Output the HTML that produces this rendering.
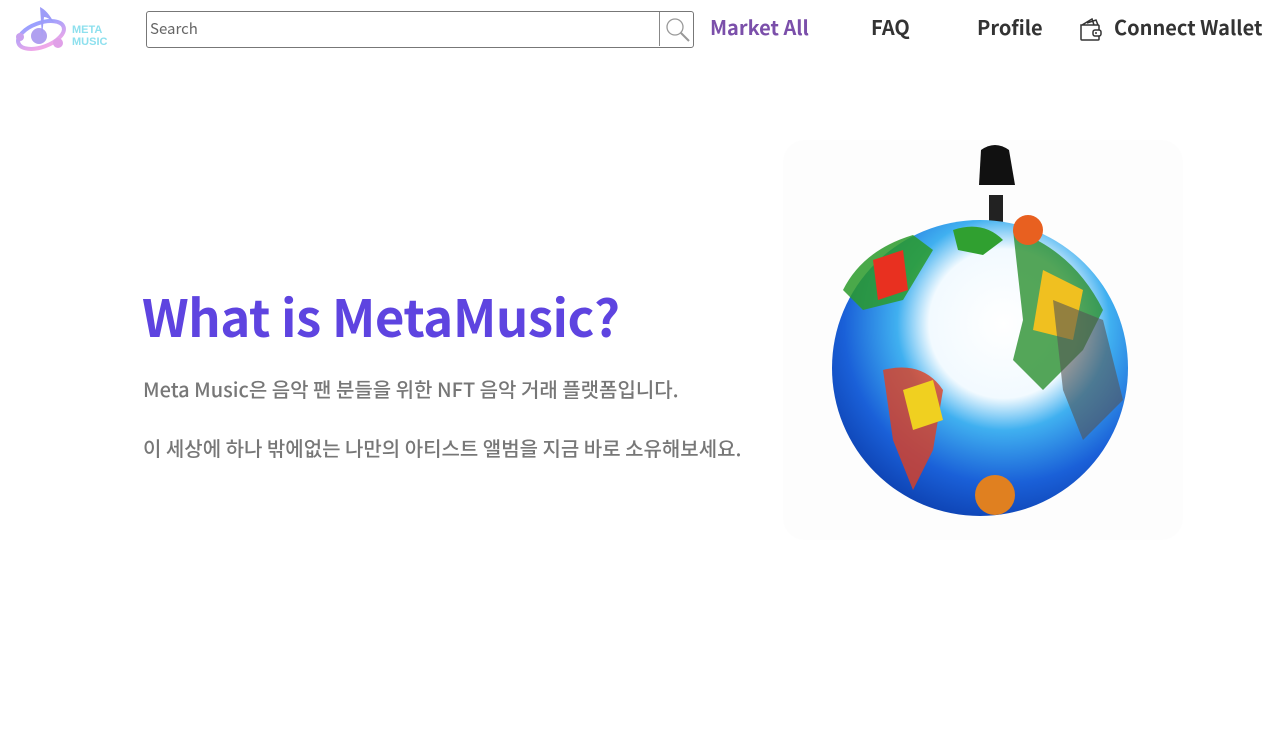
<!DOCTYPE html>
<html><head><meta charset="utf-8"><style>
*{margin:0;padding:0;box-sizing:border-box}
body{width:1272px;height:729px;background:#fff;font-family:"Noto Sans CJK KR","Liberation Sans",sans-serif;position:relative;overflow:hidden}
.nav{position:absolute;font-weight:700;font-size:20px;color:#333;top:12px;line-height:30px}
.search{position:absolute;left:146px;top:11px;width:548px;height:37px;border:1.5px solid #777;border-radius:3px}
.search span{position:absolute;left:3px;top:6px;font-size:15px;color:#666;font-family:"Noto Sans CJK KR",sans-serif;}
.search .btn{position:absolute;right:0;top:0;width:34px;height:34px;border-left:1px solid #888}
h1{position:absolute;left:142px;top:277px;font-size:51px;font-weight:700;color:#5e44e0;letter-spacing:-0.5px;line-height:76px}
p{position:absolute;left:143px;font-size:20px;font-weight:500;color:#777;line-height:28px}
.card{position:absolute;left:783px;top:140px;width:400px;height:400px;border-radius:22px;background:#fdfdfd}
</style></head><body>
<svg style="position:absolute;left:14px;top:3px" width="100" height="52" viewBox="0 0 100 52">
<defs><linearGradient id="lg" x1="0" y1="0" x2="0" y2="1"><stop offset="0" stop-color="#9aa0ff"/><stop offset="1" stop-color="#f0a8e8"/></linearGradient></defs>
<ellipse cx="27" cy="32" rx="24" ry="12" fill="none" stroke="url(#lg)" stroke-width="4" transform="rotate(-20 27 32)"/>
<circle cx="25" cy="33" r="8" fill="#b0a0f0"/>
<path d="M28 33 L26 4 Q34 8 40 20 Q34 14 30 14 Z" fill="#9d9cf8"/>
<circle cx="6" cy="34" r="4" fill="#c8a0ee"/><circle cx="44" cy="40" r="5" fill="#e0a0e8"/>
<text x="58" y="30" font-family="Liberation Sans,sans-serif" font-weight="700" font-size="11" fill="#8ee0ee">META</text>
<text x="58" y="42" font-family="Liberation Sans,sans-serif" font-weight="700" font-size="11" fill="#8ee0ee">MUSIC</text>
</svg>
<div class="search"><span>Search</span><div class="btn"><svg width="34" height="34" viewBox="0 0 34 34"><circle cx="15" cy="15" r="8" fill="none" stroke="#999" stroke-width="1.3"/><path d="M21 21 L29 29" stroke="#999" stroke-width="2"/></svg></div></div>
<div class="nav" style="left:710px;color:#7b4faa">Market All</div>
<div class="nav" style="left:871px">FAQ</div>
<div class="nav" style="left:977px">Profile</div>
<svg style="position:absolute;left:1078px;top:16px" width="26" height="26" viewBox="0 0 26 26"><path d="M3 9 L3 23 Q3 24 4 24 L20 24 Q21 24 21 23 L21 10 Q21 9 20 9 Z M4 9 L14 3 L16 9 M9 7 L18 4 L20 9" fill="none" stroke="#333" stroke-width="1.5"/><rect x="15" y="14" width="8" height="6" rx="2" fill="#fff" stroke="#333" stroke-width="1.5"/><circle cx="18" cy="17" r="1" fill="#333"/></svg>
<div class="nav" style="left:1114px">Connect Wallet</div>
<h1>What is MetaMusic?</h1>
<p style="top:375px">Meta Music은 음악 팬 분들을 위한 NFT 음악 거래 플랫폼입니다.</p>
<p style="top:434px">이 세상에 하나 밖에없는 나만의 아티스트 앨범을 지금 바로 소유해보세요.</p>
<div class="card"></div>
<svg style="position:absolute;left:783px;top:140px" width="400" height="400" viewBox="0 0 400 400">
<defs><radialGradient id="g" cx="0.58" cy="0.35" r="0.72"><stop offset="0" stop-color="#fff"/><stop offset="0.35" stop-color="#f2faff"/><stop offset="0.5" stop-color="#40b0f0"/><stop offset="0.75" stop-color="#1a60d8"/><stop offset="1" stop-color="#0a3aa8"/></radialGradient></defs>
<rect x="206" y="55" width="14" height="30" fill="#222"/>
<path d="M198 10 Q212 0 226 10 L232 45 L196 45 Z" fill="#111"/>
<circle cx="197" cy="228" r="148" fill="url(#g)"/>
<path d="M60 150 Q80 110 130 95 L150 110 L120 160 L80 170 Z" fill="#2a9a2a" opacity=".85"/>
<path d="M90 120 L120 110 L125 150 L95 160 Z" fill="#e83020"/>
<path d="M170 90 Q200 80 220 100 L200 115 L175 110 Z" fill="#30a030"/>
<path d="M230 90 Q290 110 320 170 L300 210 L260 250 L230 220 L240 180 Z" fill="#2a9030" opacity=".8"/>
<path d="M260 130 L300 150 L290 200 L250 190 Z" fill="#f0c020"/>
<path d="M270 160 L320 180 L340 260 L300 300 L280 250 Z" fill="#555" opacity=".6"/>
<path d="M100 230 Q140 220 160 250 L150 310 L130 350 L110 300 Z" fill="#e04020" opacity=".8"/>
<path d="M120 250 L150 240 L160 280 L130 290 Z" fill="#f0d020"/>
<circle cx="212" cy="355" r="20" fill="#e08020"/>
<circle cx="245" cy="90" r="15" fill="#e86020"/>
</svg>
</body></html>
